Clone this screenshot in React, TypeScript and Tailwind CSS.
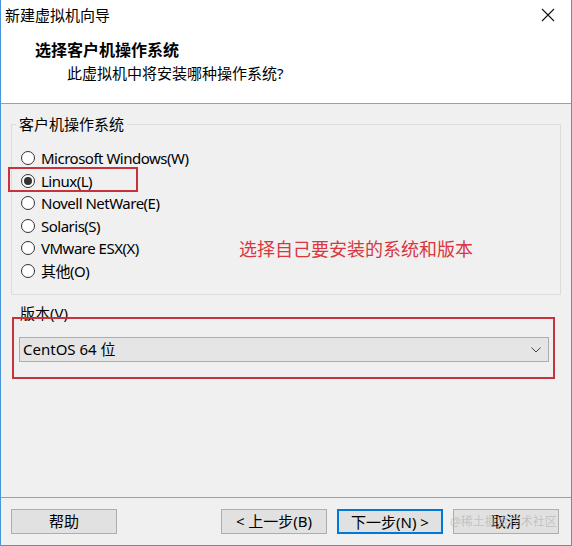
import { useState } from "react";

const font = "font-['Noto_Sans','Noto_Sans_CJK_SC',sans-serif]";

const systems = [
  "Microsoft Windows(W)",
  "Linux(L)",
  "Novell NetWare(E)",
  "Solaris(S)",
  "VMware ESX(X)",
  "其他(O)",
];

function Radio({ checked }: { checked: boolean }) {
  return (
    <span className="flex h-[14px] w-[14px] items-center justify-center rounded-full border border-[#333] bg-white">
      {checked && <span className="h-[8px] w-[8px] rounded-full bg-[#333]" />}
    </span>
  );
}

function Button({ children, primary }: { children: React.ReactNode; primary?: boolean }) {
  return (
    <button
      className={
        primary
          ? "h-[25px] w-[106px] border-2 border-[#0078d7] bg-[#e1e1e1] text-[15px] text-black"
          : "h-[25px] w-[106px] border border-[#adadad] bg-[#e1e1e1] text-[15px] text-black"
      }
    >
      {children}
    </button>
  );
}

export default function App() {
  const [os, setOs] = useState(1);

  return (
    <div className={`flex h-[546px] w-[572px] flex-col border-x border-b border-[#4a94dc] bg-[#f0f0f0] text-black ${font}`}>
      {/* header */}
      <div className="h-[104px] border-b border-[#a0a0a0] bg-white">
        <div className="flex h-[30px] items-center justify-between pl-[4px] pr-[16px]">
          <span className="text-[15px] leading-5">新建虚拟机向导</span>
          <svg width="14" height="14" viewBox="0 0 14 14">
            <path d="M1 1 L13 13 M13 1 L1 13" stroke="#111" strokeWidth="1.1" />
          </svg>
        </div>
        <div className="mt-[10px] pl-[34px] text-[16px] font-bold leading-5">选择客户机操作系统</div>
        <div className="mt-[3px] pl-[66px] text-[15px] leading-5">此虚拟机中将安装哪种操作系统?</div>
      </div>

      {/* guest os group */}
      <fieldset className="mx-[10px] mt-[10px] border border-[#dcdcdc]">
        <legend className="ml-[4px] px-[3px] text-[15px] leading-5">客户机操作系统</legend>
        <div className="relative pb-[12px] pl-[9px] pt-[13px]">
          {systems.map((name, i) => (
            <label
              key={name}
              className="flex h-[22.5px] cursor-default items-center gap-[6px] text-[15px] tracking-[-0.5px]"
              onClick={() => setOs(i)}
            >
              <Radio checked={os === i} />
              <span>{name}</span>
            </label>
          ))}
          <span className="absolute left-[-4px] top-[33px] h-[25px] w-[130px] border-2 border-[#c8323c]" />
          <span className="absolute left-[227px] top-[103px] text-[18px] leading-6 text-[#d9363e]">
            选择自己要安装的系统和版本
          </span>
        </div>
      </fieldset>

      {/* version */}
      <div className="mb-[-6px] mt-[8px] pl-[19px] text-[15px] leading-5">版本(V)</div>
      <div className="ml-[11px] mr-[16px] border-2 border-[#c8323c] pb-[15px] pl-[5px] pr-[4px] pt-[18px]">
        <div className="flex h-[25px] items-center justify-between border border-[#adadad] bg-[#e5e5e5] pl-[3px] pr-[7px] text-[15px]">
          <span>CentOS 64 位</span>
          <svg width="10" height="6" viewBox="0 0 10 6">
            <path d="M0.5 0.5 L5 5 L9.5 0.5" fill="none" stroke="#444" strokeWidth="1" />
          </svg>
        </div>
      </div>

      {/* footer */}
      <div className="mt-auto border-t border-[#a0a0a0] pb-[11px] pl-[10px] pr-[12px] pt-[11px]">
        <div className="flex items-center">
          <Button>帮助</Button>
          <div className="flex-1" />
          <div className="flex gap-[10px]">
            <Button>&lt; 上一步(B)</Button>
            <Button primary>下一步(N) &gt;</Button>
            <div className="relative">
              <Button>取消</Button>
              <span className="pointer-events-none absolute left-[-3px] top-[5px] whitespace-nowrap text-[12px] leading-4 text-[#b4b4b4]/70">
                @稀土掘金技术社区
              </span>
            </div>
          </div>
        </div>
      </div>
    </div>
  );
}
